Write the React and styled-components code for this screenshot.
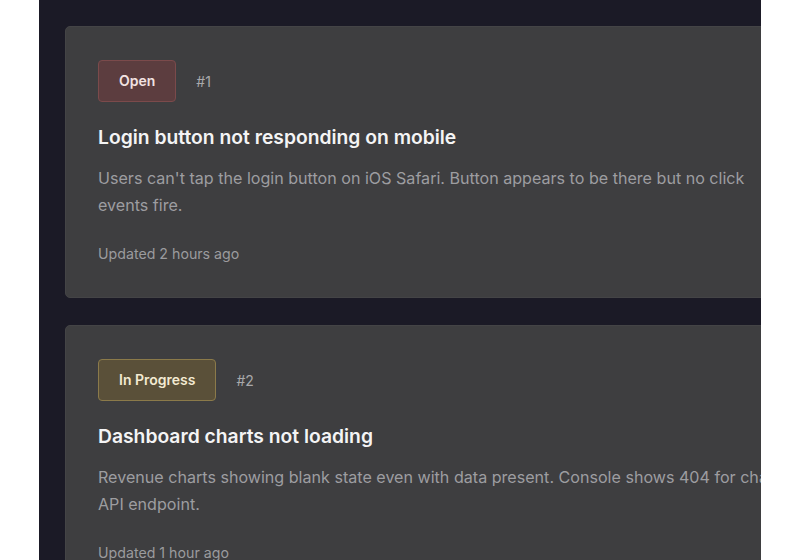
import React from 'react';
import styled, { createGlobalStyle } from 'styled-components';

const GlobalStyle = createGlobalStyle`
  html, body {
    margin: 0;
    padding: 0;
    background: #ffffff;
  }
  body {
    font-family: 'Inter', 'Noto Sans', sans-serif;
    -webkit-font-smoothing: antialiased;
  }
`;

const issues = [
  {
    id: 1,
    status: 'Open',
    title: 'Login button not responding on mobile',
    description:
      "Users can't tap the login button on iOS Safari. Button appears to be there but no click events fire.",
    updated: 'Updated 2 hours ago',
  },
  {
    id: 2,
    status: 'In Progress',
    title: 'Dashboard charts not loading',
    description:
      'Revenue charts showing blank state even with data present. Console shows 404 for chart API endpoint.',
    updated: 'Updated 1 hour ago',
  },
];

const statusColors = {
  Open: { bg: '#5c3d3f', border: '#7b4a4b', text: '#f2e2e2' },
  'In Progress': { bg: '#5a5039', border: '#8b7a4a', text: '#f3ead2' },
};

const App = () => {
  return (
    <>
      <GlobalStyle />
      <Page>
        <Panel>
          {issues.map((issue) => (
            <IssueCard key={issue.id}>
              <CardHeader>
                <StatusBadge $status={issue.status}>{issue.status}</StatusBadge>
                <IssueNumber>#{issue.id}</IssueNumber>
              </CardHeader>
              <IssueTitle>{issue.title}</IssueTitle>
              <IssueDescription>{issue.description}</IssueDescription>
              <IssueMeta>{issue.updated}</IssueMeta>
            </IssueCard>
          ))}
        </Panel>
      </Page>
    </>
  );
};

const Page = styled.div`
  width: 800px;
  height: 560px;
  display: flex;
  justify-content: center;
  overflow: hidden;
  background: #ffffff;
`;

const Panel = styled.div`
  width: 722px;
  height: 560px;
  background: #1b1a26;
  padding: 26px;
  box-sizing: border-box;
  display: flex;
  flex-direction: column;
  gap: 27px;
  overflow: hidden;
`;

const IssueCard = styled.div`
  flex-shrink: 0;
  width: 760px;
  background: #3e3e40;
  border: 1px solid #444446;
  border-radius: 5px;
  padding: 33px 32px 33px 32px;
  box-sizing: border-box;
`;

const CardHeader = styled.div`
  display: flex;
  align-items: center;
  gap: 20px;
`;

const StatusBadge = styled.span`
  display: inline-block;
  padding: 10px 20px;
  font-size: 14px;
  line-height: 20px;
  font-weight: 600;
  border-radius: 4px;
  background: ${({ $status }) => statusColors[$status].bg};
  border: 1px solid ${({ $status }) => statusColors[$status].border};
  color: ${({ $status }) => statusColors[$status].text};
`;

const IssueNumber = styled.span`
  font-size: 14px;
  color: #a9a9ab;
`;

const IssueTitle = styled.h2`
  margin: 22px 0 0;
  font-size: 19.3px;
  line-height: 26px;
  font-weight: 600;
  color: #f4f4f5;
`;

const IssueDescription = styled.p`
  margin: 15px 0 0;
  font-size: 16.1px;
  line-height: 27px;
  color: #9d9da0;
  max-width: 692px;
`;

const IssueMeta = styled.div`
  margin-top: 25px;
  font-size: 14.2px;
  line-height: 20px;
  color: #9b9b9e;
`;

export default App;
